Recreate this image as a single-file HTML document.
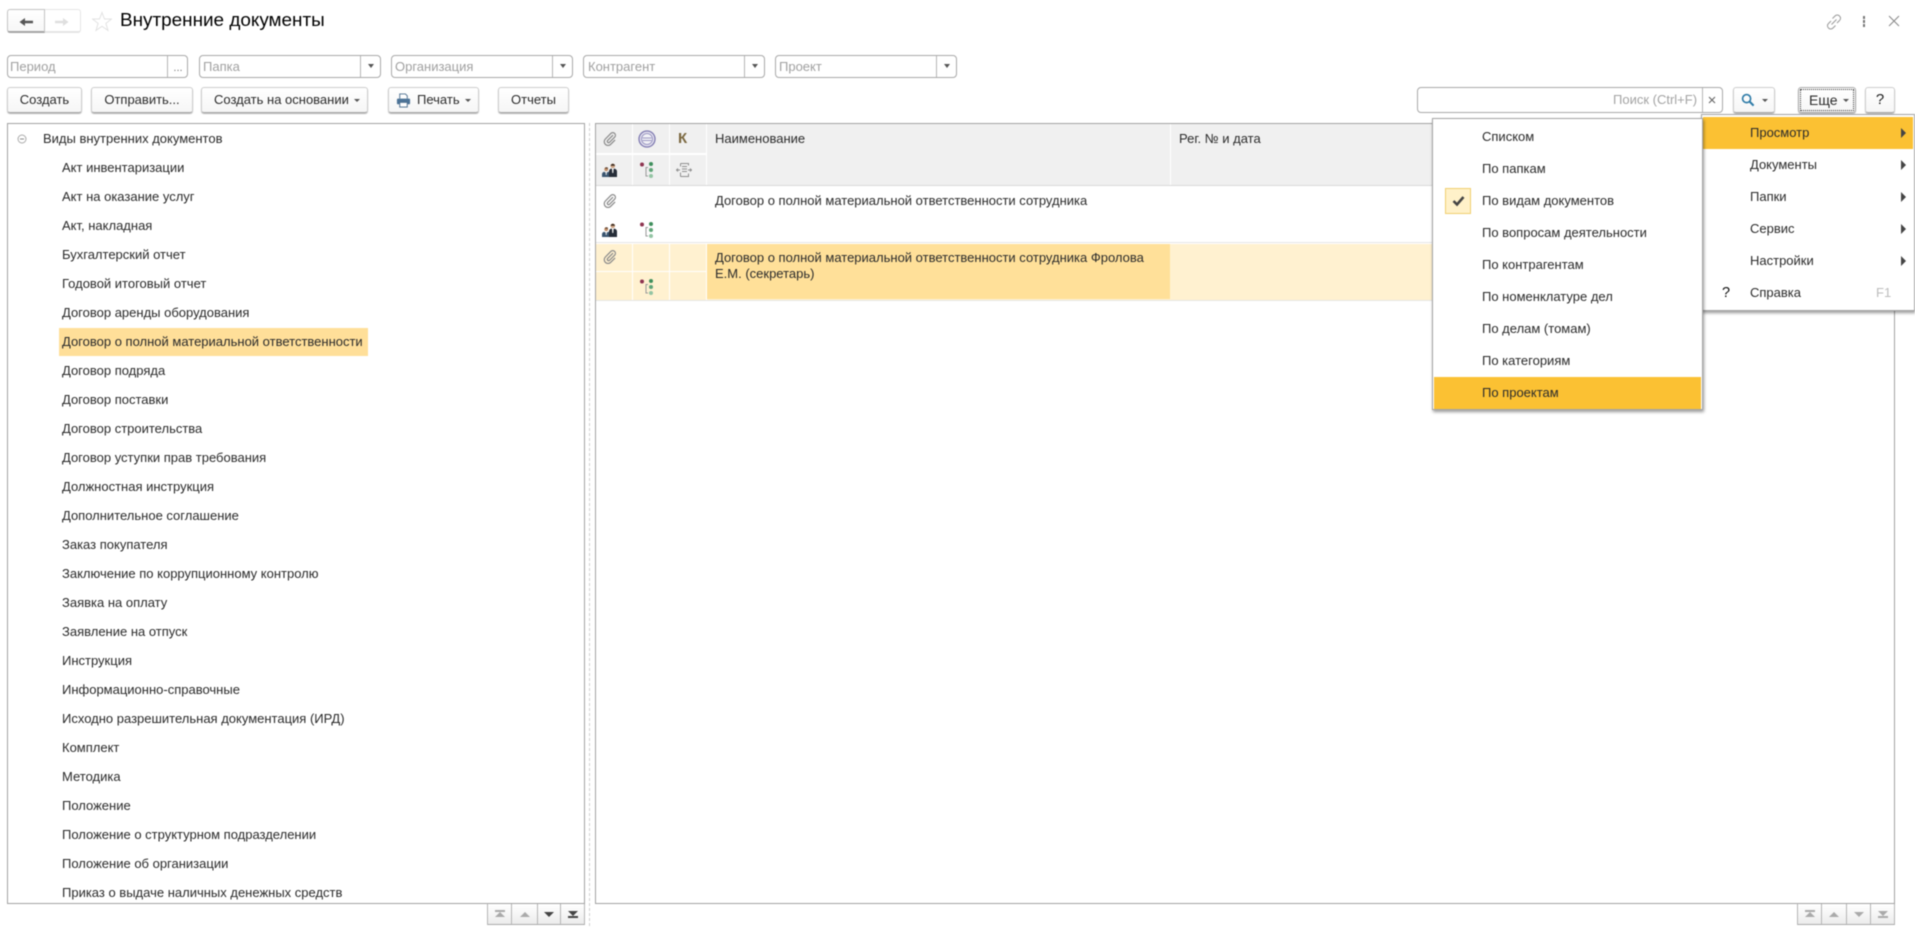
<!DOCTYPE html>
<html lang="ru"><head><meta charset="utf-8"><title>Внутренние документы</title>
<style>
html,body{margin:0;padding:0;background:#fff;width:1915px;height:935px;overflow:hidden}
body{font-family:"Liberation Sans","DejaVu Sans",sans-serif;font-size:13px;color:#2b2b2b;position:relative}
#r{position:absolute;left:0;top:0;width:1915px;height:935px;overflow:hidden;filter:blur(.4px)}
#r div,#r svg{position:absolute;box-sizing:border-box}
.t{white-space:nowrap;line-height:16px;height:16px}
.f{border:1px solid #a9a9a9;border-radius:4px;height:23px;top:55px;background:#fff;color:#a0a0a0;line-height:21px;padding-left:3px}
.s{top:0;bottom:0;width:1px;background:#b5b5b5}
.c{top:8px;width:0;height:0;border-left:3px solid transparent;border-right:3px solid transparent;border-top:4px solid #555}
.b{top:87px;height:26px;border:1px solid #cdcdcd;border-bottom:1px solid #a8a8a8;border-radius:3px;background:linear-gradient(#fff,#f6f6f6);box-shadow:0 1px 1px #b5b5b5;line-height:24px;text-align:center;white-space:nowrap;color:#2b2b2b}
.h{background:#f0f0f0}
.m{background:#fff;border:1px solid #a5a5a5;box-shadow:1px 2px 3px rgba(0,0,0,.4)}
.p{top:0;height:21px;background:linear-gradient(#fff,#ececec);border-right:1px solid #b5b5b5;border-bottom:1px solid #aaa}
.u{left:8px;top:8px;width:0;height:0;border-left:5px solid transparent;border-right:5px solid transparent;border-bottom:5px solid #aaa}
.d{left:8px;top:8px;width:0;height:0;border-left:5px solid transparent;border-right:5px solid transparent;border-top:5px solid #aaa}
.l{left:8px;width:10px;height:2px;top:6px;background:#aaa}
.tr{right:0;width:0;height:0;left:1901px;border-top:5px solid transparent;border-bottom:5px solid transparent;border-left:5px solid #444}
</style></head><body>
<svg width="0" height="0" style="position:absolute"><defs>
<symbol id="clip" viewBox="0 0 16 16"><path d="M11.500 3.500 5.200 9.800a1.500 1.500 0 0 0 2.100 2.100l6-6a3 3 0 0 0-4.300-4.300L2.700 8a4.300 4.300 0 0 0 6.100 6.100l5-5" fill="none" stroke="#8a8a8a" stroke-width="1.400"/></symbol>
<symbol id="ppl" viewBox="0 0 16 14"><circle cx="4.200" cy="6.300" r="1.900" fill="#c08e68"/><path d="M3 4.800q1.500-1.200 3 0l-.2.800H3.200z" fill="#5a4030"/><path d="M0 14v-2.600q0-2 2.200-2.600l2 1.200 2-1.200q2.200.6 2.200 2.600V14z" fill="#3a5570"/><path d="M3.500 9h1.400l-.3 3h-.8z" fill="#e8e8e8"/><circle cx="10.800" cy="2.900" r="2.300" fill="#cfa585"/><path d="M8.600 2.300q2.200-3 4.400 0l-.4.500H9z" fill="#3a2c22"/><path d="M7 14V8.500q0-2.300 2.300-3l1.500 1.300 1.500-1.300q2.700.7 2.700 3V14z" fill="#262d38"/><path d="M10 5.500h1.600l-.3 4.500h-1z" fill="#f4f4f4"/></symbol>
<symbol id="tree" viewBox="0 0 13 16"><circle cx="2" cy="2.500" r="2" fill="#8e3450"/><path d="M8 5.500H6v8.500h2" fill="none" stroke="#999"/><circle cx="11" cy="2" r="2" fill="#3f8f5c"/><circle cx="11" cy="8" r="2" fill="#5fa578"/><circle cx="11" cy="14" r="2" fill="#93c4a3"/></symbol>
</defs></svg>
<div id="r">
<!-- nav -->
<div style="left:7px;top:9px;width:38px;height:24px;border:1px solid #c4c4c4;border-bottom:2px solid #a5a5a5;border-radius:3px 0 0 3px;background:linear-gradient(#fff,#f7f7f7)"></div>
<div style="left:45px;top:9px;width:36px;height:24px;border:1px solid #e6e6e6;border-left:0;border-bottom:2px solid #e4e4e4;border-radius:0 3px 3px 0;background:#fff"></div>
<svg style="left:18px;top:15px" width="16" height="14" viewBox="0 0 16 14"><path d="M1.500 7 7 3v2.700h8v2.600H7V11z" fill="#555"/></svg>
<svg style="left:54px;top:15px" width="16" height="14" viewBox="0 0 16 14"><path d="M14.500 7 9 3v2.700H1v2.600h8V11z" fill="#dfdfdf"/></svg>
<svg style="left:92px;top:11px" width="20" height="21" viewBox="0 0 20 21"><path d="M10 1.500 12.500 8h7l-5.600 4.400 2.100 7L10 15.300 4 19.400l2.100-7L.5 8h7z" fill="#fff" stroke="#e2e2e2"/></svg>
<div class="t" style="left:120px;top:10px;font-size:18.900px;line-height:22px;height:22px;color:#000">Внутренние документы</div>
<!-- right top icons -->
<svg style="left:1826px;top:14px" width="16" height="16" viewBox="0 0 16 16" fill="none" stroke="#999" stroke-width="1"><path d="M6.500 4.500 9 2a3 3 0 0 1 4.500 0 3 3 0 0 1 0 4.500L11 9M9.500 11.500 7 14a3 3 0 0 1-4.500 0 3 3 0 0 1 0-4.500L5 7M5.500 10.500l5-5"/></svg>
<div style="left:1863px;top:16px;width:2px;height:3px;background:#777"></div><div style="left:1863px;top:20px;width:2px;height:3px;background:#777"></div><div style="left:1863px;top:24px;width:2px;height:3px;background:#777"></div>
<svg style="left:1888px;top:15px" width="12" height="12" viewBox="0 0 12 12"><path d="M1 1l10 10M11 1 1 11" stroke="#888" stroke-width="1" fill="none"/></svg>
<!-- filters -->
<div class="f" style="left:7px;width:181px;padding-left:2px">Период<div class="s" style="left:159px"></div><div style="left:160px;top:0;width:20px;text-align:center;color:#777;font-size:11px;line-height:25px">...</div></div>
<div class="f" style="left:199px;width:182px">Папка<div class="s" style="left:160px"></div><div class="c" style="left:168px"></div></div>
<div class="f" style="left:391px;width:182px">Организация<div class="s" style="left:160px"></div><div class="c" style="left:168px"></div></div>
<div class="f" style="left:583px;width:182px;padding-left:4px">Контрагент<div class="s" style="left:160px"></div><div class="c" style="left:168px"></div></div>
<div class="f" style="left:775px;width:182px">Проект<div class="s" style="left:160px"></div><div class="c" style="left:168px"></div></div>
<!-- buttons -->
<div class="b" style="left:7px;width:75px">Создать</div>
<div class="b" style="left:91px;width:102px">Отправить...</div>
<div class="b" style="left:201px;width:167px;text-align:left;padding-left:12px">Создать на основании<div class="c" style="left:152px;top:11px;border-top-width:3px"></div></div>
<div class="b" style="left:388px;width:91px;text-align:left;padding-left:28px">Печать<div class="c" style="left:76px;top:11px;border-top-width:3px"></div>
<svg style="left:7px;top:5px" width="15" height="15" viewBox="0 0 16 16"><path d="M4 6V1h6l2 2v3" fill="#fff" stroke="#4c6f8f"/><rect x="1" y="6" width="14" height="6" rx="1" fill="#4c7397"/><rect x="4" y="10" width="8" height="5" fill="#fff" stroke="#4c6f8f"/></svg></div>
<div class="b" style="left:498px;width:71px">Отчеты</div>
<!-- search -->
<div style="left:1417px;top:87px;width:306px;height:26px;border:1px solid #a9a9a9;border-radius:4px;background:#fff"><div class="s" style="left:284px"></div></div>
<div class="t" style="left:1613px;top:92px;color:#a3a3a3">Поиск (Ctrl+F)</div>
<svg style="left:1708px;top:96px" width="8" height="8" viewBox="0 0 8 8"><path d="M1 1l6 6M7 1 1 7" stroke="#666" stroke-width="1.100"/></svg>
<div class="b" style="left:1733px;width:42px"><svg style="left:7px;top:5px" width="14" height="14" viewBox="0 0 15 15"><circle cx="6" cy="6" r="4.300" fill="none" stroke="#2f7ca8" stroke-width="1.800"/><path d="M9 9l4.500 4.500" stroke="#2f7ca8" stroke-width="2.200"/></svg><div class="c" style="left:28px;top:11px;border-top-width:3px"></div></div>
<div class="b" style="left:1798px;width:58px;text-align:left;padding-left:10px;font-size:14px;border-color:#aaa"><div style="left:1px;top:1px;right:1px;bottom:1px;border:1px dotted #333"></div>Еще<div class="c" style="left:44px;top:11px;border-top-width:3px"></div></div>
<div class="b" style="left:1865px;width:30px;font-size:15px;color:#222">?</div>
<!-- tree -->
<div style="left:7px;top:123px;width:578px;height:781px;border:1px solid #a3a3a3;overflow:hidden;background:#fff"></div>
<svg style="left:17px;top:134px" width="10" height="10" viewBox="0 0 10 10"><circle cx="5" cy="5" r="4" fill="none" stroke="#aaa"/><path d="M3 5h4" stroke="#888"/></svg>
<div style="left:59px;top:328px;width:309px;height:28px;background:#ffdf99"></div>
<div class="t" style="left:43px;top:131px">Виды внутренних документов</div>
<div class="t" style="left:62px;top:160px">Акт инвентаризации</div>
<div class="t" style="left:62px;top:189px">Акт на оказание услуг</div>
<div class="t" style="left:62px;top:218px">Акт, накладная</div>
<div class="t" style="left:62px;top:247px">Бухгалтерский отчет</div>
<div class="t" style="left:62px;top:276px">Годовой итоговый отчет</div>
<div class="t" style="left:62px;top:305px">Договор аренды оборудования</div>
<div class="t" style="left:62px;top:334px">Договор о полной материальной ответственности</div>
<div class="t" style="left:62px;top:363px">Договор подряда</div>
<div class="t" style="left:62px;top:392px">Договор поставки</div>
<div class="t" style="left:62px;top:421px">Договор строительства</div>
<div class="t" style="left:62px;top:450px">Договор уступки прав требования</div>
<div class="t" style="left:62px;top:479px">Должностная инструкция</div>
<div class="t" style="left:62px;top:508px">Дополнительное соглашение</div>
<div class="t" style="left:62px;top:537px">Заказ покупателя</div>
<div class="t" style="left:62px;top:566px">Заключение по коррупционному контролю</div>
<div class="t" style="left:62px;top:595px">Заявка на оплату</div>
<div class="t" style="left:62px;top:624px">Заявление на отпуск</div>
<div class="t" style="left:62px;top:653px">Инструкция</div>
<div class="t" style="left:62px;top:682px">Информационно-справочные</div>
<div class="t" style="left:62px;top:711px">Исходно разрешительная документация (ИРД)</div>
<div class="t" style="left:62px;top:740px">Комплект</div>
<div class="t" style="left:62px;top:769px">Методика</div>
<div class="t" style="left:62px;top:798px">Положение</div>
<div class="t" style="left:62px;top:827px">Положение о структурном подразделении</div>
<div class="t" style="left:62px;top:856px">Положение об организации</div>
<div class="t" style="left:62px;top:885px">Приказ о выдаче наличных денежных средств</div>
<!-- left pager -->
<div style="left:487px;top:903px;width:98px;height:22px;border-left:1px solid #b5b5b5;border-top:1px solid #a3a3a3">
<div class="p" style="left:0;width:24px"><div class="l" style="left:7px;top:6px"></div><div class="u" style="left:7px;top:8px"></div></div>
<div class="p" style="left:24px;width:26px"><div class="u" style="left:8px;top:8px"></div></div>
<div class="p" style="left:50px;width:23px"><div class="d" style="left:6px;top:8px;border-top-color:#444"></div></div>
<div class="p" style="left:73px;width:24px"><div class="d" style="left:7px;top:7px;border-top-color:#444"></div><div class="l" style="left:7px;top:12px;background:#444"></div></div>
</div>
<div style="left:589px;top:123px;width:0;height:803px;border-left:1px dashed #d0d0d0"></div>
<!-- grid -->
<div style="left:595px;top:123px;width:1300px;height:781px;border:1px solid #a3a3a3;background:#fff"></div>
<div class="h" style="left:596px;top:124px;width:36px;height:29px"></div>
<div class="h" style="left:633px;top:124px;width:36px;height:29px"></div>
<div class="h" style="left:670px;top:124px;width:36px;height:29px"></div>
<div class="h" style="left:596px;top:155px;width:36px;height:30px"></div>
<div class="h" style="left:633px;top:155px;width:36px;height:30px"></div>
<div class="h" style="left:670px;top:155px;width:36px;height:30px"></div>
<div class="h" style="left:707px;top:124px;width:463px;height:61px"></div>
<div class="h" style="left:1171px;top:124px;width:723px;height:61px"></div>
<div style="left:596px;top:185px;width:1298px;height:1px;background:#d9d9d9"></div>
<div style="left:596px;top:242px;width:1298px;height:1px;background:#e6e6e6"></div>
<div style="left:596px;top:244px;width:1298px;height:56px;background:#fff1d0"></div>
<div style="left:707px;top:244px;width:463px;height:55px;background:#ffe099"></div>
<div style="left:632px;top:244px;width:1px;height:56px;background:#fff"></div>
<div style="left:669px;top:244px;width:1px;height:56px;background:#fff"></div>
<div style="left:706px;top:244px;width:1px;height:56px;background:#fff"></div>
<div style="left:596px;top:271px;width:110px;height:1px;background:#fff"></div>
<div style="left:596px;top:300px;width:1298px;height:1px;background:#e6e6e6"></div>
<svg style="left:603px;top:132px" width="14" height="14"><use href="#clip"/></svg>
<svg style="left:638px;top:130px" width="18" height="18" viewBox="0 0 18 18"><circle cx="9" cy="9" r="8" fill="#e6e4f0" stroke="#7d78b0" stroke-width="1.300"/><circle cx="9" cy="9" r="5.500" fill="#f2f2f7" stroke="#9b97c2"/><path d="M4.500 8h9M4.500 10.500h9" stroke="#9b97c2"/></svg>
<div class="t" style="left:678px;top:131px;font-weight:bold;font-size:15px;color:#7b6840">К</div>
<svg style="left:602px;top:163px" width="16" height="14"><use href="#ppl"/></svg>
<svg style="left:640px;top:162px" width="13" height="16"><use href="#tree"/></svg>
<svg style="left:676px;top:162px" width="16" height="16" viewBox="0 0 16 16" fill="none" stroke="#8f8f8f"><path d="M4.500 1.500h8v2M4.500 1.500v3M4.500 14.500v-4M4.500 14.500h8v-3M6 4.500h5M6 7h5M6 9.500h5"/><path d="M.5 8H4M2 6.500.5 8 2 9.500M12 8h3.500M14 6.500 15.500 8 14 9.500"/></svg>
<div class="t" style="left:715px;top:131px">Наименование</div>
<div class="t" style="left:1179px;top:131px">Рег. № и дата</div>
<svg style="left:603px;top:194px" width="14" height="14"><use href="#clip"/></svg>
<div class="t" style="left:715px;top:193px">Договор о полной материальной ответственности сотрудника</div>
<svg style="left:602px;top:223px" width="16" height="14"><use href="#ppl"/></svg>
<svg style="left:640px;top:222px" width="13" height="16"><use href="#tree"/></svg>
<svg style="left:603px;top:250px" width="14" height="14"><use href="#clip"/></svg>
<div class="t" style="left:715px;top:250px">Договор о полной материальной ответственности сотрудника Фролова</div>
<div class="t" style="left:715px;top:266px">Е.М. (секретарь)</div>
<svg style="left:640px;top:279px" width="13" height="16"><use href="#tree"/></svg>
<!-- right pager -->
<div style="left:1797px;top:903px;width:98px;height:22px;border-left:1px solid #b5b5b5;border-top:1px solid #a3a3a3">
<div class="p" style="left:0;width:24px"><div class="l" style="left:7px;top:6px"></div><div class="u" style="left:7px;top:8px"></div></div>
<div class="p" style="left:24px;width:25px"><div class="u" style="left:7px;top:8px"></div></div>
<div class="p" style="left:49px;width:24px"><div class="d" style="left:7px;top:8px"></div></div>
<div class="p" style="left:73px;width:24px"><div class="d" style="left:7px;top:7px"></div><div class="l" style="left:7px;top:12px"></div></div>
</div>
<!-- main menu -->
<div class="m" style="left:1701px;top:114px;width:214px;height:197px"></div>
<div style="left:1703px;top:117px;width:210px;height:32px;background:#fbc133"></div>
<div class="t" style="left:1750px;top:125px">Просмотр</div>
<div class="t" style="left:1750px;top:157px">Документы</div>
<div class="t" style="left:1750px;top:189px">Папки</div>
<div class="t" style="left:1750px;top:221px">Сервис</div>
<div class="t" style="left:1750px;top:253px">Настройки</div>
<div class="t" style="left:1750px;top:285px">Справка</div>
<div class="t" style="left:1722px;top:285px;color:#111;font-size:14.500px">?</div>
<div class="t" style="left:1876px;top:285px;color:#bdbdbd">F1</div>
<div class="tr" style="top:128px"></div><div class="tr" style="top:160px"></div><div class="tr" style="top:192px"></div><div class="tr" style="top:224px"></div><div class="tr" style="top:256px"></div>
<!-- submenu -->
<div class="m" style="left:1432px;top:118px;width:271px;height:292px"></div>
<div style="left:1434px;top:377px;width:267px;height:32px;background:#fbc133"></div>
<div style="left:1445px;top:188px;width:26px;height:26px;background:#fff1c9;border:1px solid #f0cf70"></div>
<svg style="left:1452px;top:195px" width="13" height="12" viewBox="0 0 13 12"><path d="M1.500 6 5 9.500 11.500 2" fill="none" stroke="#444" stroke-width="2.600"/></svg>
<div class="t" style="left:1482px;top:129px">Списком</div>
<div class="t" style="left:1482px;top:161px">По папкам</div>
<div class="t" style="left:1482px;top:193px">По видам документов</div>
<div class="t" style="left:1482px;top:225px">По вопросам деятельности</div>
<div class="t" style="left:1482px;top:257px">По контрагентам</div>
<div class="t" style="left:1482px;top:289px">По номенклатуре дел</div>
<div class="t" style="left:1482px;top:321px">По делам (томам)</div>
<div class="t" style="left:1482px;top:353px">По категориям</div>
<div class="t" style="left:1482px;top:385px">По проектам</div>
</div>
</body></html>
